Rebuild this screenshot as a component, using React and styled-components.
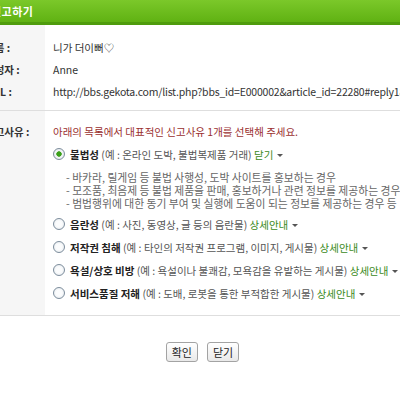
import styled, { createGlobalStyle } from "styled-components";

const GlobalStyle = createGlobalStyle`
  html, body {
    margin: 0;
    padding: 0;
    background: #fff;
    overflow: hidden;
  }
  body {
    font-family: "Noto Sans CJK KR", "Noto Sans", sans-serif;
    font-size: 10.5px;
    color: #333;
  }
`;

const reasons = [
  {
    title: "불법성",
    example: "(예 : 온라인 도박, 불법복제품 거래)",
    link: "닫기",
    checked: true,
    details: [
      "- 바카라, 릴게임 등 불법 사행성, 도박 사이트를 홍보하는 경우",
      "- 모조품, 최음제 등 불법 제품을 판매, 홍보하거나 관련 정보를 제공하는 경우",
      "- 범법행위에 대한 동기 부여 및 실행에 도움이 되는 정보를 제공하는 경우 등",
    ],
  },
  { title: "음란성", example: "(예 : 사진, 동영상, 글 등의 음란물)", link: "상세안내" },
  { title: "저작권 침해", example: "(예 : 타인의 저작권 프로그램, 이미지, 게시물)", link: "상세안내" },
  { title: "욕설/상호 비방", example: "(예 : 욕설이나 불쾌감, 모욕감을 유발하는 게시물)", link: "상세안내" },
  { title: "서비스품질 저해", example: "(예 : 도배, 로봇을 통한 부적합한 게시물)", link: "상세안내" },
];

function App() {
  return (
    <>
      <GlobalStyle />
      <Page>
        <Header>신고하기</Header>

        <Section>
          <LabelCol $top={12}>
            <Label $height={22}>이름 :</Label>
            <Label $height={22}>작성자 :</Label>
            <Label $height={22}>URL :</Label>
          </LabelCol>
          <ValueCol $top={12} $bottom={7}>
            <Value>니가 더이뻐♡</Value>
            <Value>Anne</Value>
            <Value $tight>
              http://bbs.gekota.com/list.php?bbs_id=E000002&amp;article_id=22280#reply18472
            </Value>
          </ValueCol>
        </Section>

        <Section>
          <LabelCol $top={13}>
            <Label $height={16}>신고사유 :</Label>
          </LabelCol>
          <ValueCol $top={13} $bottom={10.5}>
            <Instruction>아래의 목록에서 대표적인 신고사유 1개를 선택해 주세요.</Instruction>
            <ReasonList>
              {reasons.map((r) => (
                <Reason key={r.title}>
                  <ReasonRow>
                    <Radio $checked={r.checked} />
                    <span>
                      <Title>{r.title}</Title> <Example>{r.example}</Example>{" "}
                      <MoreLink>
                        {r.link}
                        <Caret />
                      </MoreLink>
                    </span>
                  </ReasonRow>
                  {r.details && (
                    <DetailList>
                      {r.details.map((d) => (
                        <DetailItem key={d}>{d}</DetailItem>
                      ))}
                    </DetailList>
                  )}
                </Reason>
              ))}
            </ReasonList>
          </ValueCol>
        </Section>

        <ButtonBar>
          <Button>확인</Button>
          <Button>닫기</Button>
        </ButtonBar>
      </Page>
    </>
  );
}

const Page = styled.div`
  width: 455px;
  margin-left: -25px;
`;

const Header = styled.div`
  height: 22px;
  padding-left: 16px;
  background: linear-gradient(#7bc82a, #60b213);
  border-bottom: 3px solid #4f9c0d;
  color: #fff;
  font-size: 11px;
  font-weight: 700;
  letter-spacing: 0.5px;
  line-height: 22px;
`;

const Section = styled.div`
  display: flex;
  border-bottom: 1px solid #dedede;
`;

const LabelCol = styled.div`
  flex: 0 0 70px;
  box-sizing: border-box;
  padding: ${(p) => p.$top}px 0 0 10px;
  background: #f6f6f6;
  display: flex;
  flex-direction: column;
`;

const Label = styled.div`
  height: ${(p) => p.$height}px;
  line-height: ${(p) => p.$height}px;
  font-weight: 700;
  color: #333;
  white-space: nowrap;
`;

const ValueCol = styled.div`
  flex: 1;
  min-width: 0;
  padding: ${(p) => p.$top}px 0 ${(p) => p.$bottom}px 8px;
  display: flex;
  flex-direction: column;
`;

const Value = styled.div`
  height: 22px;
  line-height: 22px;
  color: #333;
  white-space: nowrap;
  letter-spacing: ${(p) => (p.$tight ? "-0.2px" : "0")};
`;

const Instruction = styled.div`
  height: 16px;
  line-height: 16px;
  color: #9a2f2f;
  white-space: nowrap;
`;

const ReasonList = styled.div`
  display: flex;
  flex-direction: column;
  margin-top: 2.5px;
`;

const Reason = styled.div`
  display: flex;
  flex-direction: column;
`;

const ReasonRow = styled.div`
  display: flex;
  align-items: center;
  gap: 5px;
  height: 23px;
  white-space: nowrap;
`;

const Radio = styled.span`
  flex: none;
  width: 10px;
  height: 10px;
  border: 1px solid #7d8d9c;
  border-radius: 50%;
  background: ${(p) =>
    p.$checked
      ? "radial-gradient(circle, #3a9f1a 0 2.4px, #f4f6f8 3px, #dde3e8 100%)"
      : "radial-gradient(circle, #fbfcfd 0 40%, #dfe5ea 100%)"};
`;

const Title = styled.span`
  font-weight: 700;
  color: #222;
`;

const Example = styled.span`
  color: #555;
`;

const MoreLink = styled.span`
  color: #3a8a22;
`;

const Caret = styled.span`
  display: inline-block;
  margin-left: 4px;
  vertical-align: middle;
  border-left: 3px solid transparent;
  border-right: 3px solid transparent;
  border-top: 3px solid #555;
`;

const DetailList = styled.div`
  display: flex;
  flex-direction: column;
  margin: 5px 0 3px 13px;
`;

const DetailItem = styled.div`
  height: 13px;
  line-height: 13px;
  font-size: 10.8px;
  color: #666;
  white-space: nowrap;
`;

const ButtonBar = styled.div`
  display: flex;
  justify-content: center;
  gap: 9px;
  padding-top: 26px;
`;

const Button = styled.button`
  height: 20px;
  padding: 0 5px;
  border: 1px solid #a3a3a3;
  border-radius: 3px;
  background: linear-gradient(#ffffff, #e9e9e9);
  font-family: "Noto Sans CJK KR", "Noto Sans", sans-serif;
  font-size: 11px;
  color: #222;
  line-height: 18px;
  cursor: pointer;
`;

export default App;
